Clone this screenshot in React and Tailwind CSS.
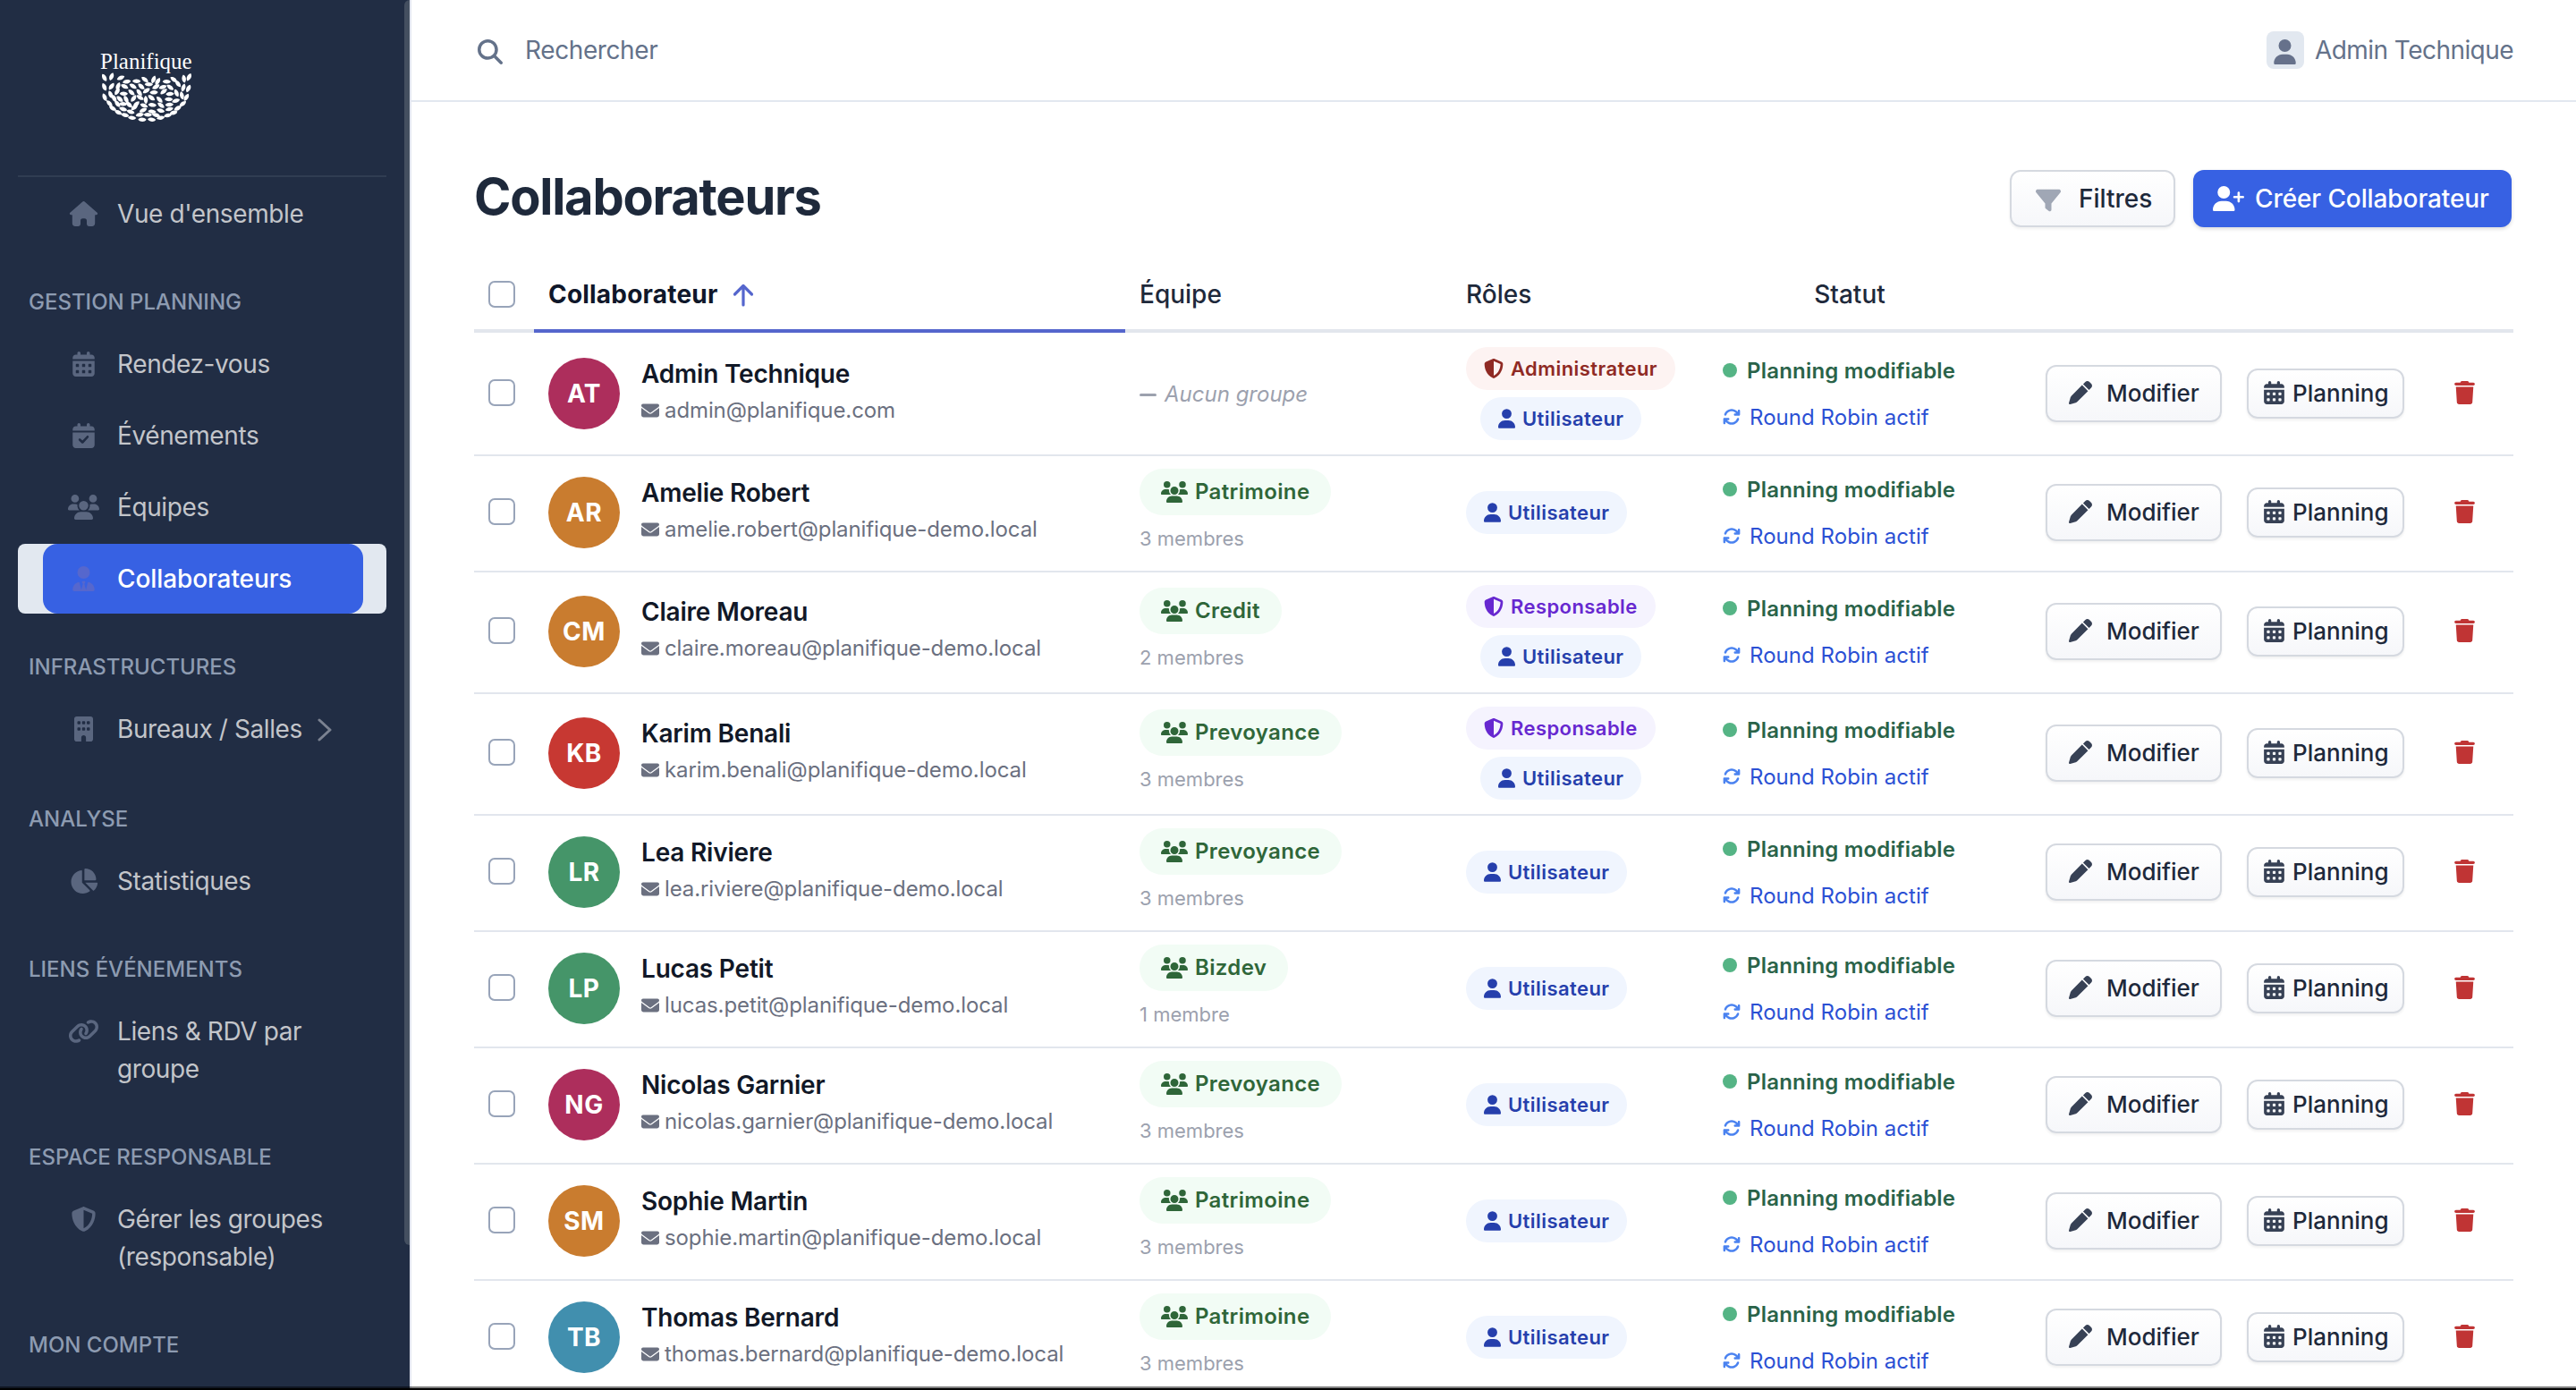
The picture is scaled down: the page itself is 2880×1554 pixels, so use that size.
import React from 'react';
import {
  FaArrowsRotate,
  FaBuilding,
  FaChartPie,
  FaEnvelope,
  FaFilter,
  FaLink,
  FaMagnifyingGlass,
  FaPen,
  FaShieldHalved,
  FaTrash,
  FaUser,
  FaUserPlus,
  FaUsers,
  FaUserTie,
} from 'react-icons/fa6';

const TEXT_FONT = "font-['Inter','Liberation_Sans',sans-serif]";

// x, y, angle of every leaf in the logo
const leaves = [
  [80, 140, 60], [104, 137, -70], [135, 141, -25], [155, 154, -10], [188, 152, 0], [216, 147, 35],
  [245, 147, -70], [259, 153, -60], [289, 154, 0], [313, 147, 35], [347, 144, 80], [364, 139, -65],
  [80, 172, 65], [104, 170, -55], [126, 169, -70], [148, 170, 25], [176, 169, 30], [204, 170, 40],
  [229, 163, 0], [253, 171, -30], [276, 172, -20], [301, 173, 35], [327, 161, 50], [362, 177, -65],
  [345, 174, -75], [81, 206, 65], [101, 197, 65], [123, 187, -60], [145, 194, 0], [171, 190, 40],
  [197, 190, 50], [221, 184, -35], [246, 190, -5], [279, 187, -40], [300, 195, -5], [322, 192, 65],
  [340, 200, 75], [355, 206, -60], [97, 227, 45], [113, 210, 60], [132, 212, 40], [153, 213, 60],
  [178, 210, -55], [200, 207, 30], [219, 215, 85], [238, 208, 35], [265, 214, 45], [296, 213, 0],
  [320, 218, -20], [343, 228, -40], [108, 243, 30], [124, 228, 50], [143, 229, 0], [163, 231, 40],
  [187, 230, -45], [213, 234, 20], [241, 232, 5], [270, 233, 35], [298, 231, -5], [326, 243, -30],
  [127, 257, 25], [143, 246, 15], [168, 255, 15], [181, 240, -40], [210, 250, -25], [240, 254, 5],
  [269, 251, 15], [298, 246, -15], [312, 258, -20], [149, 266, 10], [173, 275, 5], [199, 265, -10],
  [226, 265, 0], [253, 266, 10], [269, 275, -10], [293, 267, -15], [207, 281, 0], [239, 281, 5],
];

function Logo() {
  return (
    <svg viewBox="0 0 450 330" className="w-[150px] h-[110px]" fill="#fff">
      <text x="66" y="112" fontSize="77" fontFamily="'Liberation Serif', serif" textLength="308" lengthAdjust="spacingAndGlyphs">
        Planifique
      </text>
      {leaves.map(([x, y, a], i) => (
        <path key={i} d="M-14 0C-8 -9 6 -9 14 0C8 9 -6 9 -14 0Z" transform={`translate(${x} ${y}) rotate(${a})`} />
      ))}
    </svg>
  );
}

function HouseIcon({ className }) {
  return (
    <svg viewBox="0 0 576 512" className={className} fill="currentColor">
      <path d="M267 8C279-3 297-3 309 8L565 232C584 250 572 280 546 280H520V448C520 484 496 512 460 512H402C372 512 352 490 352 462V400C352 368 336 350 308 350H268C240 350 224 368 224 400V462C224 490 204 512 174 512H116C80 512 56 484 56 448V280H30C4 280-8 250 11 232Z" />
    </svg>
  );
}

function CalendarIcon({ className, check }) {
  return (
    <svg viewBox="0 0 448 512" className={className} fill="currentColor">
      <path d="M128 0c17.700 0 32 14.300 32 32v32h128V32c0-17.700 14.300-32 32-32s32 14.300 32 32v32h32c35.300 0 64 28.700 64 64v26H0v-26c0-35.300 28.700-64 64-64h32V32c0-17.700 14.300-32 32-32z" />
      {check ? (
        <path
          fillRule="evenodd"
          d="M0 190H448V448C448 483 419 512 384 512H64C29 512 0 483 0 448ZM318 262C308 254 296 256 288 264L200 358L160 322C150 313 136 313 127 322C118 332 118 346 127 355L183 410C193 420 208 420 218 410L322 298C332 286 330 270 318 262Z"
        />
      ) : (
        <path
          fillRule="evenodd"
          d="M0 190H448V448C448 483 419 512 384 512H64C29 512 0 483 0 448ZM80 252h32q16 0 16 16v32q0 16-16 16h-32q-16 0-16-16v-32q0-16 16-16zM208 252h32q16 0 16 16v32q0 16-16 16h-32q-16 0-16-16v-32q0-16 16-16zM336 252h32q16 0 16 16v32q0 16-16 16h-32q-16 0-16-16v-32q0-16 16-16zM80 380h32q16 0 16 16v32q0 16-16 16h-32q-16 0-16-16v-32q0-16 16-16zM208 380h32q16 0 16 16v32q0 16-16 16h-32q-16 0-16-16v-32q0-16 16-16zM336 380h32q16 0 16 16v32q0 16-16 16h-32q-16 0-16-16v-32q0-16 16-16z"
        />
      )}
    </svg>
  );
}

function CalendarCheckIcon({ className }) {
  return <CalendarIcon className={className} check />;
}

const menu = [
  { items: [{ label: "Vue d'ensemble", icon: HouseIcon }] },
  {
    title: 'Gestion planning',
    items: [
      { label: 'Rendez-vous', icon: CalendarIcon },
      { label: 'Événements', icon: CalendarCheckIcon },
      { label: 'Équipes', icon: FaUsers },
      { label: 'Collaborateurs', icon: FaUserTie, active: true },
    ],
  },
  { title: 'Infrastructures', items: [{ label: 'Bureaux / Salles', icon: FaBuilding, more: true }] },
  { title: 'Analyse', items: [{ label: 'Statistiques', icon: FaChartPie }] },
  { title: 'Liens événements', items: [{ label: 'Liens & RDV par groupe', icon: FaLink }] },
  { title: 'Espace responsable', items: [{ label: 'Gérer les groupes (responsable)', icon: FaShieldHalved }] },
  { title: 'Mon compte', items: [] },
];

function MenuItem({ item }) {
  const Icon = item.icon;
  return (
    <li className={item.active ? 'ml-5 w-[412px] rounded-lg bg-[#e2e8f0]' : item.more ? 'ml-5 w-[412px] mb-0.5' : 'ml-5 w-[412px]'}>
      <a
        className={
          item.active
            ? 'flex items-start ml-7 w-[358px] pl-7 py-[18px] rounded-2xl bg-[#3761e3] text-white font-medium tracking-[-0.1px]'
            : 'flex items-start ml-7 w-[358px] pl-7 py-[18px] text-[#c3c5ca] tracking-[-0.4px]'
        }
      >
        <span className={item.active ? 'flex items-center w-[35px] h-[42px] text-[#5667cd]' : 'flex items-center w-[35px] h-[42px] text-[#5a667f]'}>
          <Icon className="h-7 w-[35px]" />
        </span>
        <span className="ml-5 max-w-[248px] leading-[42px]">{item.label}</span>
        {item.more && (
          <svg viewBox="0 0 16 26" className="w-4 h-[26px] ml-[17px] mt-[9px]" fill="none" stroke="#7b8291" strokeWidth="3" strokeLinecap="round" strokeLinejoin="round">
            <path d="M2 2l12 11L2 24" />
          </svg>
        )}
      </a>
    </li>
  );
}

function Sidebar() {
  return (
    <aside className="relative shrink-0 w-[460px] h-full overflow-hidden bg-[#212d44] border-r-2 border-[#e2e5ef] text-[28px]">
      <div className="h-[196px] pt-10 pl-[90px]">
        <Logo />
      </div>
      <div className="ml-5 w-[412px] h-0.5 mb-0.5 bg-[#303d52]" />
      <nav>
        {menu.map((section, i) => (
          <div key={i}>
            {section.title && (
              <h6 className="flex items-center h-[90px] pt-[30px] pl-8 text-2xl font-medium uppercase text-[#8d9bb1]">
                {section.title}
              </h6>
            )}
            <ul className="flex flex-col gap-0.5">
              {section.items.map(item => (
                <MenuItem key={item.label} item={item} />
              ))}
            </ul>
          </div>
        ))}
      </nav>
      {/* scrollbar thumb */}
      <div className="absolute right-0 top-0 w-1.5 h-[1392px] rounded-l-md bg-[#444f60]" />
    </aside>
  );
}

const people = [
  { initials: 'AT', color: 'bg-[#ad2e5c]', name: 'Admin Technique', email: 'admin@planifique.com', roles: ['admin', 'user'] },
  { initials: 'AR', color: 'bg-[#c97c2f]', name: 'Amelie Robert', email: 'amelie.robert@planifique-demo.local', team: 'Patrimoine', members: '3 membres', roles: ['user'] },
  { initials: 'CM', color: 'bg-[#c97c2f]', name: 'Claire Moreau', email: 'claire.moreau@planifique-demo.local', team: 'Credit', members: '2 membres', roles: ['manager', 'user'] },
  { initials: 'KB', color: 'bg-[#c73832]', name: 'Karim Benali', email: 'karim.benali@planifique-demo.local', team: 'Prevoyance', members: '3 membres', roles: ['manager', 'user'] },
  { initials: 'LR', color: 'bg-[#459569]', name: 'Lea Riviere', email: 'lea.riviere@planifique-demo.local', team: 'Prevoyance', members: '3 membres', roles: ['user'] },
  { initials: 'LP', color: 'bg-[#459569]', name: 'Lucas Petit', email: 'lucas.petit@planifique-demo.local', team: 'Bizdev', members: '1 membre', roles: ['user'] },
  { initials: 'NG', color: 'bg-[#ad2e5c]', name: 'Nicolas Garnier', email: 'nicolas.garnier@planifique-demo.local', team: 'Prevoyance', members: '3 membres', roles: ['user'] },
  { initials: 'SM', color: 'bg-[#c97c2f]', name: 'Sophie Martin', email: 'sophie.martin@planifique-demo.local', team: 'Patrimoine', members: '3 membres', roles: ['user'] },
  { initials: 'TB', color: 'bg-[#418fae]', name: 'Thomas Bernard', email: 'thomas.bernard@planifique-demo.local', team: 'Patrimoine', members: '3 membres', roles: ['user'] },
];

const roles = {
  admin: { label: 'Administrateur', icon: FaShieldHalved, size: 'w-[22px]', style: 'bg-[#fdf3f2] text-[#8f2a24]' },
  manager: { label: 'Responsable', icon: FaShieldHalved, size: 'w-[22px]', style: 'bg-[#f5f3fe] text-[#6728d0]' },
  user: { label: 'Utilisateur', icon: FaUser, size: 'w-[19px]', style: 'bg-[#f0f5fe] text-[#263fac]' },
};

function Checkbox() {
  return <span className="block ml-4 mb-0.5 w-[30px] h-[30px] rounded-[7px] border-2 border-[#98a4b9] bg-white" />;
}

function RoleBadge({ role, indent }) {
  const { label, icon: Icon, size, style } = roles[role];
  return (
    <span className={`flex items-center h-12 px-5 rounded-full text-[22px] font-semibold tracking-[0.43px] ${style} ${indent ? 'ml-4' : ''}`}>
      <Icon className={`h-[22px] mr-2 ${size}`} />
      {label}
    </span>
  );
}

function PersonRow({ person }) {
  const height = person.roles.length > 1 ? (person.team ? 'h-[136px] pb-0.5' : 'h-[138px]') : 'h-[130px] pb-0.5';
  return (
    <div className={`grid grid-cols-[67px_661px_365px_287px_361px_1fr] items-center border-b-2 border-[#e2e6ed] ${height}`}>
      <Checkbox />
      <div className="flex items-center pl-4">
        <div className={`flex items-center justify-center w-20 h-20 rounded-full text-white text-[28px] font-bold tracking-[0.5px] ${person.color}`}>
          {person.initials}
        </div>
        <div className="ml-6 pb-1.5">
          <p className="text-[28px] leading-[42px] font-semibold text-[#111827] tracking-[-0.2px]">{person.name}</p>
          <p className="flex items-center pt-0.5 text-2xl leading-9 text-[#6b7080] tracking-[-0.1px]">
            <FaEnvelope className="w-5 h-5 mr-1.5" />
            {person.email}
          </p>
        </div>
      </div>
      <div className="flex flex-col items-start pl-4">
        {person.team ? (
          <>
            <span className="flex items-center h-[52px] px-6 rounded-full bg-[#f2fcf5] text-[#2f6639] text-2xl font-semibold tracking-[0.35px]">
              <FaUsers className="h-6 w-[30px] mr-2" />
              {person.team}
            </span>
            <span className="mt-2.5 mb-[3px] text-[22px] leading-[33px] text-[#9ca1ae]">{person.members}</span>
          </>
        ) : (
          <span className="flex items-center pt-0.5 text-2xl italic text-[#9ca1ae]">
            <span className="w-[19px] h-[3px] mr-[9px] rounded bg-[#9ca1ae]" />
            Aucun groupe
          </span>
        )}
      </div>
      <div className="flex flex-col items-start gap-2 pl-4">
        {person.roles.map((role, i) => (
          <RoleBadge key={role} role={role} indent={i > 0} />
        ))}
      </div>
      <div className="flex flex-col gap-4 pt-0.5 pl-4 text-2xl leading-9">
        <span className="flex items-center font-semibold text-[#2a6349] tracking-[0.2px]">
          <span className="w-4 h-4 mr-[11px] mb-0.5 rounded-full bg-[#55b485]" />
          Planning modifiable
        </span>
        <span className="flex items-center text-[#2b50d4] tracking-[0.05px]">
          <FaArrowsRotate className="w-5 h-5 mr-2.5 mb-0.5 text-[#4a82f0]" />
          Round Robin actif
        </span>
      </div>
      <div className="flex items-center pl-4 text-[26px] font-medium text-[#1e293b]">
        <button className="flex items-center w-[197px] h-16 pl-6 pb-0.5 rounded-xl border-2 border-[#d5d9e0] bg-linear-to-b from-white to-[#f6f7fa] shadow-[0_2px_3px_rgba(0,0,0,0.06)]">
          <FaPen className="w-[26px] h-[26px] mr-4 text-[#374155]" />
          Modifier
        </button>
        <button className="flex items-center w-44 h-14 ml-7 pl-[17px] pb-0.5 rounded-xl border-2 border-[#d5d9e0] bg-linear-to-b from-white to-[#f6f7fa] shadow-[0_2px_3px_rgba(0,0,0,0.06)]">
          <CalendarIcon className="h-[26px] w-[23px] mr-[9px] text-[#374155]" />
          Planning
        </button>
        <FaTrash className="h-[26px] w-[23px] ml-14 mb-0.5 text-[#c03434]" />
      </div>
    </div>
  );
}

export default function App() {
  return (
    <div className={`relative flex w-[2880px] h-[1554px] overflow-hidden bg-white antialiased ${TEXT_FONT}`}>
      <Sidebar />
      <main className="flex-1 min-w-0 h-full overflow-hidden">
        <header className="flex items-center justify-between h-[114px] pl-[74px] pr-[70px] border-b-2 border-[#e2e8f0] text-[28px] text-[#64728a]">
          <div className="flex items-center tracking-[-0.4px]">
            <FaMagnifyingGlass className="w-7 h-7 mr-[25px] mt-1" />
            Rechercher
          </div>
          <div className="flex items-center tracking-[-0.55px]">
            <span className="flex items-end justify-center w-[42px] h-[42px] pb-[5px] mr-3 rounded-lg bg-[#e2e8f0]">
              <FaUser className="h-7 w-[25px] text-[#66718b]" />
            </span>
            Admin Technique
          </div>
        </header>

        <section className="px-[70px] pt-[76px]">
          <div className="flex items-center justify-between h-16 mb-[34px] pr-0.5">
            <h1 className="pb-1 text-[56px] leading-none font-bold tracking-[-1.25px] text-[#1e293b]">Collaborateurs</h1>
            <div className="flex gap-5 text-[28px] font-medium">
              <button className="flex items-center w-[185px] h-16 pl-[27px] rounded-xl border-2 border-[#d5d9e0] bg-linear-to-b from-white to-[#f6f7fa] text-[#1e293b] shadow-[0_2px_3px_rgba(0,0,0,0.06)]">
                <FaFilter className="w-7 h-7 mr-5 mt-1 text-[#a0a7b5]" />
                Filtres
              </button>
              <button className="flex items-center w-[356px] h-16 pl-[22px] rounded-xl bg-[#3761e3] text-white tracking-[-0.1px] shadow-[0_2px_4px_rgba(0,0,0,0.15)]">
                <FaUserPlus className="h-7 w-[35px] mr-3" />
                Créer Collaborateur
              </button>
            </div>
          </div>

          <div className="grid grid-cols-[67px_661px_365px_287px_316px_1fr] h-[84px] text-[28px] font-medium text-[#1e293b]">
            <div className="flex items-center pt-1 border-b-4 border-[#e2e6ed]">
              <Checkbox />
            </div>
            <div className="flex items-center pt-0.5 pl-4 border-b-4 border-[#5566cd] font-bold tracking-[0.2px] text-[#0f172a]">
              Collaborateur
              <svg viewBox="0 0 24 26" className="w-6 h-[26px] ml-4 mt-0.5" fill="none" stroke="#5566cd" strokeWidth="3.2" strokeLinecap="round" strokeLinejoin="round">
                <path d="M12 24V2.500M2.500 12L12 2.500L21.500 12" />
              </svg>
            </div>
            <div className="flex items-center pt-0.5 pl-4 border-b-4 border-[#e2e6ed]">Équipe</div>
            <div className="flex items-center pt-0.5 pl-4 border-b-4 border-[#e2e6ed]">Rôles</div>
            <div className="flex items-center justify-center pt-0.5 border-b-4 border-[#e2e6ed]">Statut</div>
            <div className="border-b-4 border-[#e2e6ed]" />
          </div>

          {people.map(person => (
            <PersonRow key={person.email} person={person} />
          ))}
        </section>
      </main>
      {/* window edge */}
      <div className="absolute inset-x-0 bottom-0 h-1 border-t-2 border-black/50 bg-black bg-clip-padding" />
    </div>
  );
}
